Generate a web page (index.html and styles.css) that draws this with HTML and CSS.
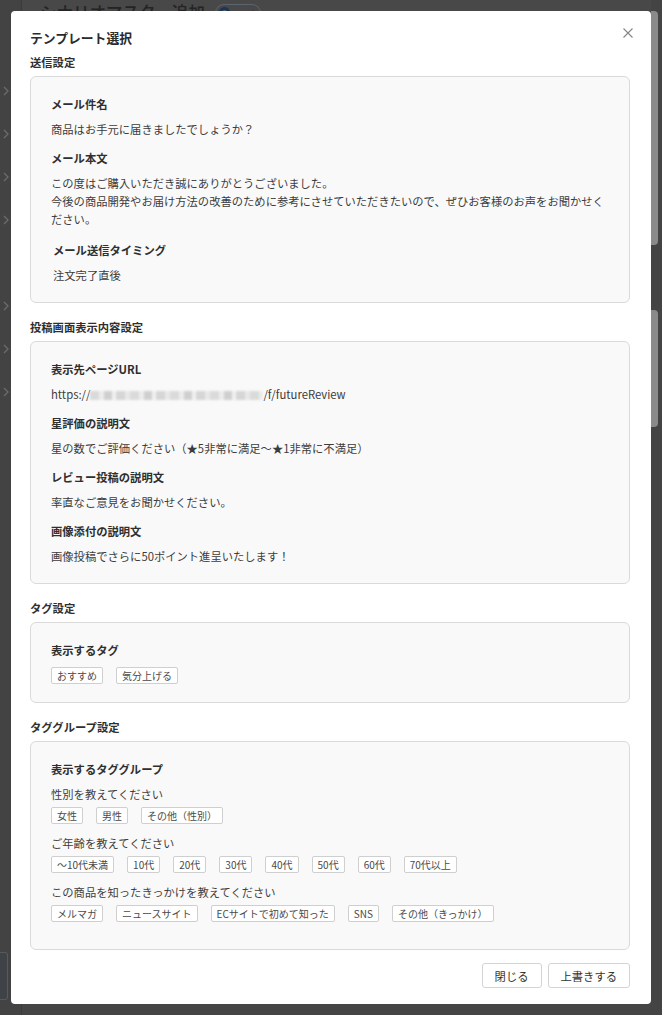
FILE: index.html
```html
<!DOCTYPE html>
<html lang="ja">
<head>
<meta charset="utf-8">
<title>テンプレート選択</title>
<link rel="stylesheet" href="styles.css">
</head>
<body>
<div class="page">
  <nav class="sidebar">
    <span class="side-item"><svg class="chev" viewBox="0 0 6 10"><polyline points="1,1 5,5 1,9"/></svg></span>
    <span class="side-item"><svg class="chev" viewBox="0 0 6 10"><polyline points="1,1 5,5 1,9"/></svg></span>
    <span class="side-item"><svg class="chev" viewBox="0 0 6 10"><polyline points="1,1 5,5 1,9"/></svg></span>
    <span class="side-item"><svg class="chev" viewBox="0 0 6 10"><polyline points="1,1 5,5 1,9"/></svg></span>
    <span class="side-item"></span>
    <span class="side-item"><svg class="chev" viewBox="0 0 6 10"><polyline points="1,1 5,5 1,9"/></svg></span>
    <span class="side-item"><svg class="chev" viewBox="0 0 6 10"><polyline points="1,1 5,5 1,9"/></svg></span>
    <span class="side-item"><svg class="chev" viewBox="0 0 6 10"><polyline points="1,1 5,5 1,9"/></svg></span>
    <span class="side-box"></span>
  </nav>
  <div class="page-center">
    <header class="page-header">
      <h1 class="page-title">シナリオマスタ　追加</h1>
      <span class="help-pill"><span class="help-dot">?</span>ヘルプ</span>
    </header>
  </div>
  <aside class="page-aside">
    <div class="aside-panel aside-panel-a"></div>
    <div class="aside-panel aside-panel-b"></div>
  </aside>
</div>

<section class="modal" role="dialog" aria-label="テンプレート選択">
  <button class="modal-close" aria-label="閉じる">
    <svg viewBox="0 0 10 10"><path d="M0.5 0.5 L9.5 9.5 M9.5 0.5 L0.5 9.5"/></svg>
  </button>
  <h2 class="modal-title">テンプレート選択</h2>

  <div class="section">
    <h3 class="section-label">送信設定</h3>
    <div class="card">
      <div class="field">
        <div class="field-title">メール件名</div>
        <div class="field-value">商品はお手元に届きましたでしょうか？</div>
      </div>
      <div class="field">
        <div class="field-title">メール本文</div>
        <div class="field-value">この度はご購入いただき誠にありがとうございました。<br>今後の商品開発やお届け方法の改善のために参考にさせていただきたいので、ぜひお客様のお声をお聞かせください。</div>
      </div>
      <div class="field field-timing">
        <div class="field-title">メール送信タイミング</div>
        <div class="field-value">注文完了直後</div>
      </div>
    </div>
  </div>

  <div class="section">
    <h3 class="section-label">投稿画面表示内容設定</h3>
    <div class="card">
      <div class="field">
        <div class="field-title">表示先ページURL</div>
        <div class="field-value">https://<span class="redacted"></span>/f/futureReview</div>
      </div>
      <div class="field">
        <div class="field-title">星評価の説明文</div>
        <div class="field-value">星の数でご評価ください（★5非常に満足～★1非常に不満足）</div>
      </div>
      <div class="field">
        <div class="field-title">レビュー投稿の説明文</div>
        <div class="field-value">率直なご意見をお聞かせください。</div>
      </div>
      <div class="field">
        <div class="field-title">画像添付の説明文</div>
        <div class="field-value">画像投稿でさらに50ポイント進呈いたします！</div>
      </div>
    </div>
  </div>

  <div class="section">
    <h3 class="section-label">タグ設定</h3>
    <div class="card">
      <div class="field-title">表示するタグ</div>
      <div class="tags tags-first">
        <span class="tag">おすすめ</span>
        <span class="tag">気分上げる</span>
      </div>
    </div>
  </div>

  <div class="section">
    <h3 class="section-label">タググループ設定</h3>
    <div class="card card-groups">
      <div class="field-title">表示するタググループ</div>
      <div class="group">
        <div class="group-question">性別を教えてください</div>
        <div class="tags">
          <span class="tag">女性</span>
          <span class="tag">男性</span>
          <span class="tag">その他（性別）</span>
        </div>
      </div>
      <div class="group">
        <div class="group-question">ご年齢を教えてください</div>
        <div class="tags">
          <span class="tag">～10代未満</span>
          <span class="tag">10代</span>
          <span class="tag">20代</span>
          <span class="tag">30代</span>
          <span class="tag">40代</span>
          <span class="tag">50代</span>
          <span class="tag">60代</span>
          <span class="tag">70代以上</span>
        </div>
      </div>
      <div class="group">
        <div class="group-question">この商品を知ったきっかけを教えてください</div>
        <div class="tags">
          <span class="tag">メルマガ</span>
          <span class="tag">ニュースサイト</span>
          <span class="tag">ECサイトで初めて知った</span>
          <span class="tag">SNS</span>
          <span class="tag">その他（きっかけ）</span>
        </div>
      </div>
    </div>
  </div>

  <div class="modal-footer">
    <button class="btn">閉じる</button>
    <button class="btn">上書きする</button>
  </div>
</section>
</body>
</html>
```

FILE: styles.css
```css
* { box-sizing: border-box; }

html, body {
  margin: 0;
  padding: 0;
}

body {
  width: 662px;
  height: 1015px;
  overflow: hidden;
  background: #454545;
  font-family: "Noto Sans CJK JP", "Noto Sans", sans-serif;
  color: #333;
}

/* ---------- dimmed page behind the dialog ---------- */
.page {
  display: flex;
  height: 1015px;
}

.sidebar {
  width: 22px;
  flex: none;
  display: flex;
  flex-direction: column;
  padding-top: 69px;
  background: #434343;
  border-right: 1px solid #3b3b3b;
}

.side-item {
  height: 43px;
  display: flex;
  align-items: center;
  padding-left: 3px;
}

.chev {
  width: 6px;
  height: 10px;
  fill: none;
  stroke: #6c6c6c;
  stroke-width: 1.3;
}

.side-box {
  margin-top: auto;
  margin-bottom: 15px;
  width: 8px;
  height: 48px;
  background: #3f4348;
  border: 1px solid #565a5e;
  border-left: none;
  border-radius: 0 3px 3px 0;
}

.page-center {
  flex: 1;
  min-width: 0;
}

.page-header {
  height: 26px;
  display: flex;
  align-items: center;
  gap: 10px;
  padding-left: 18px;
  background: #484848;
  border-bottom: 1px solid #3e3e3e;
}

.page-title {
  margin: 0;
  font-size: 16.5px;
  font-weight: 500;
  line-height: 1;
  color: #242424;
}

.help-pill {
  display: flex;
  align-items: center;
  gap: 3px;
  height: 18px;
  padding: 0 6px 0 3px;
  border: 1px solid #5b6570;
  border-radius: 9px;
  font-size: 7px;
  color: #2a2a2a;
}

.help-dot {
  width: 11px;
  height: 11px;
  border-radius: 50%;
  background: #1e3553;
  color: #6d7a8a;
  font-size: 8px;
  line-height: 11px;
  text-align: center;
}

.page-aside {
  width: 11px;
  flex: none;
  padding-top: 11px;
  display: flex;
  flex-direction: column;
  background: #444;
}

.aside-panel {
  width: 7px;
  background: #8a8a8a;
  border-radius: 0 4px 4px 0;
}

.aside-panel-a { height: 234px; }
.aside-panel-b { height: 117px; margin-top: 65px; }

/* ---------- dialog ---------- */
.modal {
  position: fixed;
  top: 11px;
  left: 11px;
  width: 640px;
  background: #fff;
  border-radius: 4px;
  padding: 17px 21px 16px 19px;
  font-size: 11.3px;
}

.modal-close {
  position: absolute;
  top: 12px;
  right: 13px;
  width: 20px;
  height: 20px;
  padding: 5px;
  border: none;
  background: none;
  cursor: pointer;
}

.modal-close svg {
  display: block;
  width: 10px;
  height: 10px;
  fill: none;
  stroke: #858585;
  stroke-width: 1.1;
}

.modal-title {
  margin: 0 0 5px;
  font-size: 12.8px;
  line-height: 20px;
  font-weight: 700;
  color: #2b2b2b;
}

.section + .section {
  margin-top: 15px;
}

.section-label {
  margin: 0 0 5px;
  font-size: 11.3px;
  line-height: 18px;
  font-weight: 700;
  color: #2f2f2f;
}

.card {
  background: #f9f9f9;
  border: 1px solid #dadada;
  border-radius: 6px;
  padding: 18px 20px 18px;
}

.card-groups {
  padding-bottom: 27px;
}

.field + .field {
  margin-top: 11px;
}

.field.field-timing {
  margin-top: 13px;
  padding-left: 2px;
}

.field-title {
  font-size: 11.3px;
  line-height: 18px;
  font-weight: 700;
  color: #2f2f2f;
}

.field-value {
  margin-top: 7px;
  line-height: 18px;
  color: #3c3c3c;
}

.redacted {
  display: inline-block;
  width: 173px;
  height: 9px;
  vertical-align: -1px;
  background:
    repeating-linear-gradient(90deg,
      #dadada 0 9px, #ececec 9px 14px, #cfcfcf 14px 22px,
      #f0f0f0 22px 26px, #d6d6d6 26px 35px, #e8e8e8 35px 40px);
  filter: blur(1.2px);
}

.tags {
  display: flex;
  flex-wrap: wrap;
  gap: 13px;
  margin-top: 4px;
}

.tags-first {
  margin-top: 8px;
}

.tag {
  display: inline-block;
  font-size: 10px;
  line-height: 15px;
  padding: 0 5px;
  background: #fff;
  border: 1px solid #cfcfcf;
  border-radius: 2px;
  color: #4a4a4a;
  white-space: nowrap;
}

.group {
  margin-top: 7px;
}

.group + .group {
  margin-top: 10px;
}

.group-question {
  line-height: 18px;
  color: #3f3f3f;
}

.modal-footer {
  display: flex;
  justify-content: flex-end;
  gap: 6px;
  margin-top: 13px;
}

.btn {
  height: 25px;
  padding: 0 12px;
  font-family: inherit;
  font-size: 11.3px;
  color: #333;
  background: #fff;
  border: 1px solid #d4d4d4;
  border-radius: 3px;
  cursor: pointer;
}
```
